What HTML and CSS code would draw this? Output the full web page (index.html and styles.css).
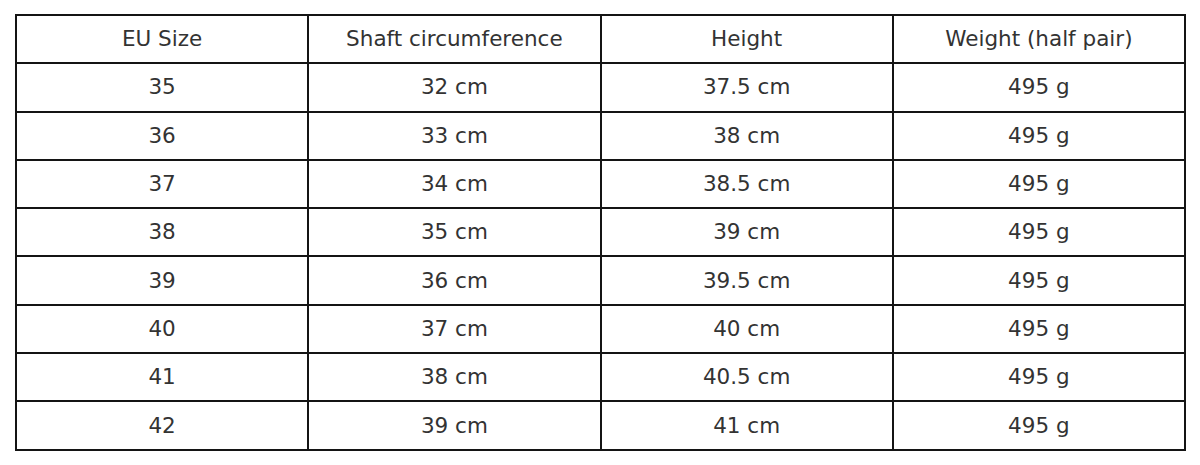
FILE: index.html
```html
<!DOCTYPE html>
<html>
<head>
<meta charset="utf-8">
<link rel="stylesheet" href="styles.css">
</head>
<body>
<table class="size-table">
  <thead>
    <tr><th>EU Size</th><th>Shaft circumference</th><th>Height</th><th>Weight (half pair)</th></tr>
  </thead>
  <tbody>
    <tr><td>35</td><td>32 cm</td><td>37.5 cm</td><td>495 g</td></tr>
    <tr><td>36</td><td>33 cm</td><td>38 cm</td><td>495 g</td></tr>
    <tr><td>37</td><td>34 cm</td><td>38.5 cm</td><td>495 g</td></tr>
    <tr><td>38</td><td>35 cm</td><td>39 cm</td><td>495 g</td></tr>
    <tr><td>39</td><td>36 cm</td><td>39.5 cm</td><td>495 g</td></tr>
    <tr><td>40</td><td>37 cm</td><td>40 cm</td><td>495 g</td></tr>
    <tr><td>41</td><td>38 cm</td><td>40.5 cm</td><td>495 g</td></tr>
    <tr><td>42</td><td>39 cm</td><td>41 cm</td><td>495 g</td></tr>
  </tbody>
</table>
</body>
</html>
```
FILE: styles.css
```css
html, body {
  margin: 0;
  background: #ffffff;
}
body {
  padding: 14px 0 0 15px;
  font-family: "DejaVu Sans", sans-serif;
  color: #333333;
}
.size-table {
  width: 1171px;
  table-layout: fixed;
  border-collapse: collapse;
  border: 2px solid #141414;
}
.size-table tr {
  height: 48.3px;
}
.size-table th,
.size-table td {
  border: 2px solid #141414;
  padding: 0;
  text-align: center;
  vertical-align: middle;
  font-size: 21.5px;
  font-weight: normal;
  line-height: 26px;
}
```
